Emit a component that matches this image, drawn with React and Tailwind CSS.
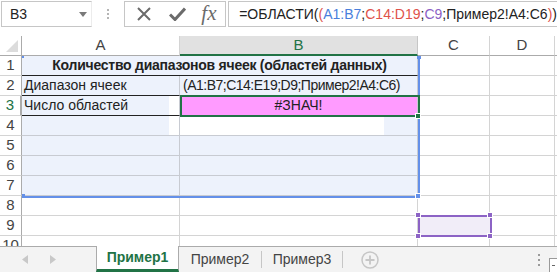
import React from "react";

const RANGE_BG = "bg-[#edf2fc]";

function RowHead({ n, active }) {
  return (
    <div
      className={`w-[22px] shrink-0 h-full flex items-center justify-center border-b border-r ${
        active ? "text-[#217346] border-r-[#217346] border-r-2" : "text-[#444]"
      } border-b-[#d4d4d4] border-r-[#ababab] bg-white text-[15px]`}
    >
      {n}
    </div>
  );
}

function Cell({ w, className = "", children }) {
  return (
    <div className={`${w} shrink-0 h-full border-b border-r overflow-hidden whitespace-nowrap ${className}`}>
      {children}
    </div>
  );
}

function Row({ n, active, children }) {
  return (
    <div className="flex h-[20px] shrink-0">
      <RowHead n={n} active={active} />
      {children}
    </div>
  );
}

function Tail() {
  return (
    <>
      <Cell w="w-[72px]" className="border-[#d4d4d4]" />
      <Cell w="w-[65px]" className="border-[#d4d4d4]" />
      <Cell w="w-[8px]" className="border-[#d4d4d4] border-r-0" />
    </>
  );
}

function Handle({ className }) {
  return <div className={`absolute w-[6px] h-[6px] border border-white ${className}`} />;
}

export default function App() {
  return (
    <div className="w-[557px] h-[272px] bg-white overflow-hidden flex flex-col font-['Liberation_Sans',sans-serif] text-[#222]">
      {/* formula bar */}
      <div className="h-[36px] shrink-0 flex items-start pt-[1px]">
        <div className="ml-[1px] w-[98px] h-[26px] border border-[#c6c6c6] border-r-[#ececec] flex items-center justify-between pl-[8px] pr-[4px] text-[14px] text-[#222]">
          <span>B3</span>
          <svg width="8" height="5" viewBox="0 0 8 5">
            <path d="M0 0h8L4 5z" fill="#7a7a7a" />
          </svg>
        </div>
        <div className="w-[34px] h-[26px] flex flex-col items-center justify-center gap-[2px]">
          <div className="w-[2px] h-[2px] bg-[#b5b5b5]" />
          <div className="w-[2px] h-[2px] bg-[#b5b5b5]" />
          <div className="w-[2px] h-[2px] bg-[#b5b5b5]" />
        </div>
        <div className="w-[111px] h-[26px] border border-[#c6c6c6] flex items-center">
          <div className="w-[38px] flex justify-center">
            <svg width="16" height="16" viewBox="0 0 16 16">
              <path d="M2 2L14 14M14 2L2 14" stroke="#6b6b6b" strokeWidth="2" />
            </svg>
          </div>
          <div className="w-[30px] flex justify-center">
            <svg width="17" height="14" viewBox="0 0 17 14">
              <path d="M1 7.5L6 12.5L16 1.5" stroke="#6b6b6b" strokeWidth="3" fill="none" />
            </svg>
          </div>
          <div className="flex-1 flex justify-center font-['Liberation_Serif',serif] italic text-[21px] text-[#6b6b6b] leading-none pb-[2px]">
            fx
          </div>
        </div>
        <div className="ml-[2px] flex-1 h-[26px] border border-[#c6c6c6] border-r-0 flex items-center pl-[10px] text-[14px] whitespace-nowrap text-[#222]">
          <span>=ОБЛАСТИ(</span>
          <span className="text-[#e0524a]">(</span>
          <span className="text-[#4a7fdc]">A1:B7</span>
          <span>;</span>
          <span className="text-[#e0524a]">C14:D19</span>
          <span>;</span>
          <span className="text-[#8c5fc5]">C9</span>
          <span>;Пример2!A4:C6</span>
          <span className="text-[#e0524a]">)</span>
          <span>)</span>
        </div>
      </div>

      {/* sheet */}
      <div className="relative h-[210px] shrink-0 overflow-hidden text-[14px]">
        {/* column headers */}
        <div className="flex h-[20px] text-[15px]">
          <div className="w-[22px] shrink-0 h-full border-b border-r border-[#ababab] bg-white relative">
            <svg className="absolute right-[3px] bottom-[3px]" width="12" height="12" viewBox="0 0 12 12">
              <path d="M12 0V12H0z" fill="#dcdcdc" />
            </svg>
          </div>
          <div className="w-[158px] shrink-0 h-full border-b border-r border-b-[#ababab] border-r-[#d4d4d4] flex items-center justify-center text-[#444]">
            A
          </div>
          <div className="w-[238px] shrink-0 h-full border-b-2 border-r border-b-[#217346] border-r-[#c6c6c6] bg-[#e1e1e1] flex items-center justify-center text-[#217346]">
            B
          </div>
          <div className="w-[72px] shrink-0 h-full border-b border-r border-b-[#ababab] border-r-[#d4d4d4] flex items-center justify-center text-[#444]">
            C
          </div>
          <div className="w-[65px] shrink-0 h-full border-b border-r border-b-[#ababab] border-r-[#d4d4d4] flex items-center justify-center text-[#444]">
            D
          </div>
          <div className="flex-1 h-full border-b border-[#ababab]" />
        </div>

        <Row n="1">
          <Cell w="w-[396px]" className={`${RANGE_BG} border-b-[#222] border-r-[#c8cbd2] flex items-center justify-center font-bold text-[14px] tracking-[-0.25px]`}>
            Количество диапазонов ячеек (областей данных)
          </Cell>
          <Tail />
        </Row>
        <Row n="2">
          <Cell w="w-[158px]" className={`${RANGE_BG} border-b-[#222] border-r-[#c8cbd2] flex items-center pl-[2px]`}>
            Диапазон ячеек
          </Cell>
          <Cell w="w-[238px]" className={`${RANGE_BG} border-b-[#222] border-r-[#c8cbd2] flex items-center pl-[3px] tracking-[-0.5px]`}>
            (A1:B7;C14:E19;D9;Пример2!A4:C6)
          </Cell>
          <Tail />
        </Row>
        <Row n="3" active>
          <Cell w="w-[158px]" className="border-b-[#222] border-r-[#c8cbd2] flex">
            <div className={`w-[147px] h-full ${RANGE_BG} flex items-center pl-[2px]`}>Число областей</div>
            <div className="flex-1 bg-white" />
          </Cell>
          <Cell w="w-[238px]" className="bg-[#ff9bff] border-b-[#222] border-r-[#c8cbd2] flex items-center justify-center">
            #ЗНАЧ!
          </Cell>
          <Tail />
        </Row>
        <Row n="4">
          <Cell w="w-[158px]" className="border-[#c8cbd2] flex">
            <div className={`w-[147px] h-full ${RANGE_BG}`} />
            <div className="flex-1 bg-white" />
          </Cell>
          <Cell w="w-[238px]" className="border-[#c8cbd2] flex">
            <div className="w-[204px] h-full bg-white" />
            <div className={`flex-1 ${RANGE_BG}`} />
          </Cell>
          <Tail />
        </Row>
        {["5", "6", "7"].map((n) => (
          <Row key={n} n={n}>
            <Cell w="w-[158px]" className={`${RANGE_BG} border-[#c8cbd2]`} />
            <Cell w="w-[238px]" className={`${RANGE_BG} border-[#c8cbd2]`} />
            <Tail />
          </Row>
        ))}
        {["8", "9", "10"].map((n) => (
          <Row key={n} n={n}>
            <Cell w="w-[158px]" className="border-[#d4d4d4]" />
            <Cell w="w-[238px]" className="border-[#d4d4d4]" />
            <Tail />
          </Row>
        ))}

        {/* blue range border A1:B7 */}
        <div className="absolute left-[22px] top-[20px] w-[398px] h-[142px] border-r-2 border-b-2 border-[#6490e8]" />
        <Handle className="left-[415px] top-[157px] bg-[#6490e8]" />
        <div className="absolute left-[22px] top-[158px] w-[3px] h-[4px] bg-[#6490e8]" />
        <div className="absolute left-[417px] top-[20px] w-[4px] h-[3px] bg-[#6490e8]" />
        <div className="absolute left-[22px] top-[20px] w-[2px] h-[2px] bg-[#6490e8]" />

        {/* active cell B3 */}
        <div className="absolute left-[180px] top-[59px] w-[240px] h-[22px] border-2 border-[#217346]" />
        <Handle className="left-[415px] top-[77px] bg-[#217346]" />

        {/* purple range C9 */}
        <div className="absolute left-[418px] top-[179px] w-[74px] h-[22px] border-2 border-[#8c63c5] bg-[#f1edf8]" />
        <Handle className="left-[415px] top-[176px] bg-[#8c63c5]" />
        <Handle className="left-[487px] top-[176px] bg-[#8c63c5]" />
        <Handle className="left-[415px] top-[197px] bg-[#8c63c5]" />
        <Handle className="left-[487px] top-[197px] bg-[#8c63c5]" />
      </div>

      {/* sheet tabs */}
      <div className="flex-1 border-t border-[#ababab] bg-[#f3f3f3] flex items-stretch text-[14px] whitespace-nowrap">
        <div className="w-[96px] shrink-0 flex items-center pl-[22px] gap-[22px]">
          <svg width="6" height="9" viewBox="0 0 6 9">
            <path d="M6 0V9L0 4.5z" fill="#c8c8c8" />
          </svg>
          <svg width="6" height="9" viewBox="0 0 6 9">
            <path d="M0 0V9L6 4.5z" fill="#c8c8c8" />
          </svg>
        </div>
        <div className="w-[83px] shrink-0 bg-white border-l border-r border-[#ababab] border-b-[3px] border-b-[#217346] -mt-[1px] flex items-center justify-center font-bold text-[#217346]">
          Пример1
        </div>
        <div className="w-[82px] shrink-0 flex items-center justify-center text-[#444]">Пример2</div>
        <div className="w-[1px] my-[4px] bg-[#c6c6c6]" />
        <div className="w-[80px] shrink-0 flex items-center justify-center text-[#444]">Пример3</div>
        <div className="w-[1px] my-[4px] bg-[#c6c6c6]" />
        <div className="w-[50px] shrink-0 flex items-center justify-center pl-[4px]">
          <svg width="18" height="18" viewBox="0 0 18 18">
            <circle cx="9" cy="9" r="8" stroke="#c6c6c6" strokeWidth="1.5" fill="none" />
            <path d="M9 4.5V13.5M4.5 9H13.5" stroke="#c6c6c6" strokeWidth="1.8" />
          </svg>
        </div>
        <div className="flex-1" />
        <div className="w-[14px] flex flex-col items-center justify-center gap-[3px]">
          <div className="w-[2px] h-[2px] bg-[#9a9a9a]" />
          <div className="w-[2px] h-[2px] bg-[#9a9a9a]" />
          <div className="w-[2px] h-[2px] bg-[#9a9a9a]" />
        </div>
        <div className="w-[8px] ml-[3px] mt-[11px] border-l border-t border-[#9a9a9a] bg-white flex items-center">
          <div className="w-[3px] h-[1px] ml-[2px] bg-[#666]" />
        </div>
      </div>
    </div>
  );
}
